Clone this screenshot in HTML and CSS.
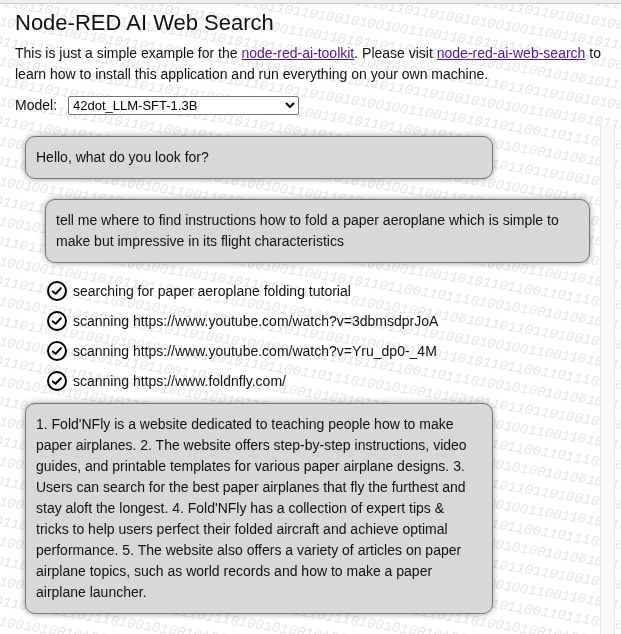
FILE: index.html
```
<!DOCTYPE html>
<html lang="en">
<head>
<meta charset="utf-8">
<title>Node-RED AI Web Search</title>
<link rel="stylesheet" href="styles.css">
</head>
<body>
<svg class="backdrop" aria-hidden="true">
  <defs>
    <g id="digits"><text transform="rotate(9.46)">0011001101011011001101110100101001010010110110110100101001</text></g>
    <pattern id="binary" width="120" height="80" patternUnits="userSpaceOnUse" x="31" y="21">
      <use href="#digits" x="-240" y="-70"/>
      <use href="#digits" x="-360" y="-70"/>
      <use href="#digits" x="0" y="10"/>
      <use href="#digits" x="-120" y="10"/>
      <use href="#digits" x="-240" y="10"/>
      <use href="#digits" x="-360" y="10"/>
      <use href="#digits" x="0" y="90"/>
      <use href="#digits" x="-120" y="90"/>
    </pattern>
    <symbol id="check" viewBox="0 0 20 20">
      <circle cx="10" cy="10" r="9"/>
      <path d="M5.8 10.4 8.6 12.8 13.9 7.2"/>
    </symbol>
  </defs>
  <rect width="100%" height="100%" fill="url(#binary)"/>
</svg>
<div class="page">
  <header class="intro">
    <h1>Node-RED AI Web Search</h1>
    <p>This is just a simple example for the <a href="#toolkit">node-red-ai-toolkit</a>. Please visit <a href="#web-search">node-red-ai-web-search</a> to learn how to install this application and run everything on your own machine.</p>
    <div class="model">
      <label for="model">Model:</label>
      <select id="model"><option>42dot_LLM-SFT-1.3B</option></select>
    </div>
  </header>
  <main class="chat">
    <div class="messages">
      <div class="bubble">Hello, what do you look for?</div>
      <div class="bubble user">tell me where to find instructions how to fold a paper aeroplane which is simple to make but impressive in its flight characteristics</div>
      <ul class="steps">
        <li><svg><use href="#check"/></svg><span>searching for paper aeroplane folding tutorial</span></li>
        <li><svg><use href="#check"/></svg><span>scanning https://www.youtube.com/watch?v=3dbmsdprJoA</span></li>
        <li><svg><use href="#check"/></svg><span>scanning https://www.youtube.com/watch?v=Yru_dp0-_4M</span></li>
        <li><svg><use href="#check"/></svg><span>scanning https://www.foldnfly.com/</span></li>
      </ul>
      <div class="bubble">1. Fold'NFly is a website dedicated to teaching people how to make paper airplanes. 2. The website offers step-by-step instructions, video guides, and printable templates for various paper airplane designs. 3. Users can search for the best paper airplanes that fly the furthest and stay aloft the longest. 4. Fold'NFly has a collection of expert tips &amp; tricks to help users perfect their folded aircraft and achieve optimal performance. 5. The website also offers a variety of articles on paper airplane topics, such as world records and how to make a paper airplane launcher.</div>
    </div>
    <div class="track"></div>
  </main>
</div>
</body>
</html>
```
FILE: styles.css
```
* { box-sizing: border-box; }

body {
  margin: 0;
  background: #fff;
  color: #111;
  font: 14px/21px "Liberation Sans", Arial, sans-serif;
}

.backdrop {
  position: fixed;
  inset: 0;
  z-index: -1;
  width: 100%;
  height: 100%;
  fill: #e6e6e6;
  font: italic 14px "Liberation Mono", monospace;
}

.page {
  display: flex;
  flex-direction: column;
  min-height: 100vh;
  border-top: 3px solid #eee;
  box-shadow: inset 0 1px #ccc;
}

.intro { padding: 4px 6px 9px 15px; }

h1 {
  margin: 0 0 5px;
  font-size: 22px;
  font-weight: 400;
  line-height: 31px;
}

p { margin: 0 0 10px; }

a { color: #551a8b; }

.model {
  display: flex;
  align-items: center;
  gap: 11px;
}

select {
  width: 231px;
  height: 19px;
  padding: 0;
  border: 1px solid #767676;
  border-radius: 2px;
  background-color: #fff;
  color: #000;
  font: 13px "Liberation Sans", Arial, sans-serif;
}

.chat {
  display: flex;
  flex: 1;
  padding: 0 6px 0 15px;
}

.messages {
  flex: 1;
  min-width: 0;
  padding: 11px 10px 20px;
}

.bubble {
  width: calc(80% + 16px);
  padding: 10px 14px 10px 10px;
  border: 1px solid #777;
  border-radius: 10px;
  background: #d8d8d8;
  box-shadow: 0 0 6px rgb(0 0 0 / 40%);
}

.bubble.user {
  width: auto;
  margin: 20px 0 0 20px;
}

.steps {
  display: grid;
  gap: 10px;
  margin: 18px 0 12px 22px;
  padding: 0;
  list-style: none;
}

.steps li {
  display: flex;
  align-items: center;
  gap: 6px;
  height: 20px;
}

.steps svg {
  flex: none;
  width: 20px;
  height: 20px;
  fill: none;
  stroke: #000;
  stroke-width: 2;
  stroke-linecap: round;
  stroke-linejoin: round;
}

.track {
  width: 15px;
  border: solid #e8e8e8;
  border-width: 0 1px;
  background: #f9f9f9;
}
```
